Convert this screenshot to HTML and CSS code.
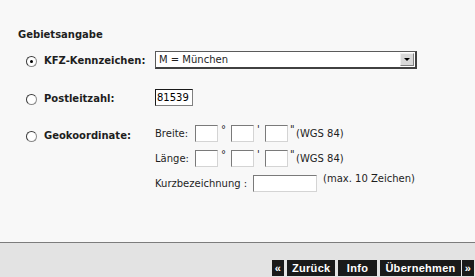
FILE: index.html
```html
<!DOCTYPE html>
<html>

<head>
    <title>Gebietsangabe</title>
    <link rel="stylesheet" href="styles.css">
</head>

<body>
    <div class="content">
        <h3 class="title">Gebietsangabe</h3>

        <div class="form">
            <label class="choice">
                <input type="radio" name="area" checked>
                <span>KFZ-Kennzeichen:</span>
            </label>
            <div class="select">
                <span class="select-value">M = München</span>
                <span class="select-arrow"><span class="tri"></span></span>
            </div>

            <label class="choice">
                <input type="radio" name="area">
                <span>Postleitzahl:</span>
            </label>
            <div>
                <input type="text" class="field plz" value="81539">
            </div>

            <label class="choice">
                <input type="radio" name="area">
                <span>Geokoordinate:</span>
            </label>
            <div class="coords">
                <div class="coord-row">
                    <span class="coord-label">Breite:</span>
                    <input type="text" class="field small">
                    <span class="unit deg">°</span>
                    <input type="text" class="field small">
                    <span class="unit min">'</span>
                    <input type="text" class="field small">
                    <span class="unit sec">"</span>
                    <span class="note">(WGS 84)</span>
                </div>
                <div class="coord-row">
                    <span class="coord-label">Länge:</span>
                    <input type="text" class="field small">
                    <span class="unit deg">°</span>
                    <input type="text" class="field small">
                    <span class="unit min">'</span>
                    <input type="text" class="field small">
                    <span class="unit sec">"</span>
                    <span class="note">(WGS 84)</span>
                </div>
                <div class="coord-row short">
                    <span class="short-label">Kurzbezeichnung :</span>
                    <input type="text" class="field name">
                    <span class="note max">(max. 10 Zeichen)</span>
                </div>
            </div>
        </div>
    </div>

    <div class="footer">
        <div class="buttons">
            <button class="btn arrow">«</button>
            <button class="btn back">Zurück</button>
            <button class="btn info">Info</button>
            <button class="btn apply">Übernehmen</button>
            <button class="btn arrow">»</button>
        </div>
    </div>
</body>

</html>
```

FILE: styles.css
```css
body {
    margin: 0;
    font-family: "DejaVu Sans", Verdana, sans-serif;
    font-size: 10px;
    color: #1e1e1e;
    background-color: #e3e3e3;
}

.content {
    height: 243px;
    padding: 28px 0 0 18px;
    box-sizing: border-box;
    background-color: #f8f8f8;
    border-bottom: 1px solid #7c7c7c;
}

.title {
    margin: 0;
    font-size: 10px;
    font-weight: bold;
    line-height: 13px;
}

.form {
    display: grid;
    grid-template-columns: 137px auto;
    row-gap: 20px;
    margin-top: 10px;
    align-items: start;
}

.choice {
    display: flex;
    align-items: center;
    font-weight: bold;
    padding-top: 4px;
    line-height: 12px;
}

.choice input {
    appearance: none;
    width: 11px;
    height: 11px;
    margin: 0 7px 0 8px;
    border: 1px solid #8a8a8a;
    border-top-color: #3a3a3a;
    border-left-color: #3a3a3a;
    border-radius: 50%;
    background-color: #fff;
    box-sizing: border-box;
    position: relative;
}

.choice input:checked::after {
    content: "";
    position: absolute;
    left: 3px;
    top: 3px;
    width: 3px;
    height: 3px;
    border-radius: 50%;
    background-color: #000;
}

.select {
    display: flex;
    width: 262px;
    height: 18px;
    box-sizing: border-box;
    border: 1px solid #5a5a5a;
    border-right: 2px solid #404040;
    border-bottom: 2px solid #404040;
    background-color: #fff;
}

.select-value {
    flex: 1;
    padding-left: 3px;
    line-height: 16px;
}

.select-arrow {
    width: 12px;
    margin: 1px;
    background-color: #d8d8d8;
    border: 1px solid #f0f0f0;
    border-right-color: #808080;
    border-bottom-color: #808080;
    display: flex;
    align-items: center;
    justify-content: center;
}

.tri {
    width: 0;
    height: 0;
    border-left: 3px solid transparent;
    border-right: 3px solid transparent;
    border-top: 3px solid #000;
}

.field {
    height: 17px;
    box-sizing: border-box;
    border: 1px solid #d4d4d4;
    border-top-color: #7a7a7a;
    border-left-color: #7a7a7a;
    background-color: #fff;
    font-family: "DejaVu Sans", Verdana, sans-serif;
    font-size: 10px;
    padding: 0 1px;
    margin: 0;
}

.plz {
    width: 38px;
    border-color: #808080;
    border-top-color: #1a1a1a;
    border-left-color: #1a1a1a;
}

.coords {
    display: flex;
    flex-direction: column;
    gap: 8px;
    margin-top: -1px;
}

.coord-row {
    display: flex;
    align-items: center;
    height: 17px;
}

.coord-label {
    width: 40px;
}

.small {
    width: 23px;
}

.unit {
    padding-left: 3px;
    box-sizing: border-box;
    align-self: flex-start;
    line-height: 10px;
}

.deg {
    width: 13px;
}

.min {
    width: 11px;
}

.sec {
    width: 8px;
    padding-left: 2px;
}

.short-label {
    width: 98px;
}

.name {
    width: 64px;
}

.max {
    margin-left: 6px;
    align-self: flex-start;
    margin-top: -2px;
}

.footer {
    height: 33px;
    display: flex;
    justify-content: flex-end;
    align-items: flex-end;
}

.buttons {
    display: flex;
    gap: 3px;
    padding-right: 1px;
}

.btn {
    height: 16px;
    padding: 0 5px;
    border: none;
    background-color: #1a1a1a;
    color: #fff;
    font-family: "Liberation Sans", Arial, sans-serif;
    font-size: 11px;
    font-weight: bold;
    line-height: 16px;
    letter-spacing: 0.3px;
}

.arrow {
    width: 12px;
    padding: 0;
}

.back {
    width: 48px;
}

.info {
    width: 39px;
}

.apply {
    width: 81px;
    margin-right: -2px;
}
```
